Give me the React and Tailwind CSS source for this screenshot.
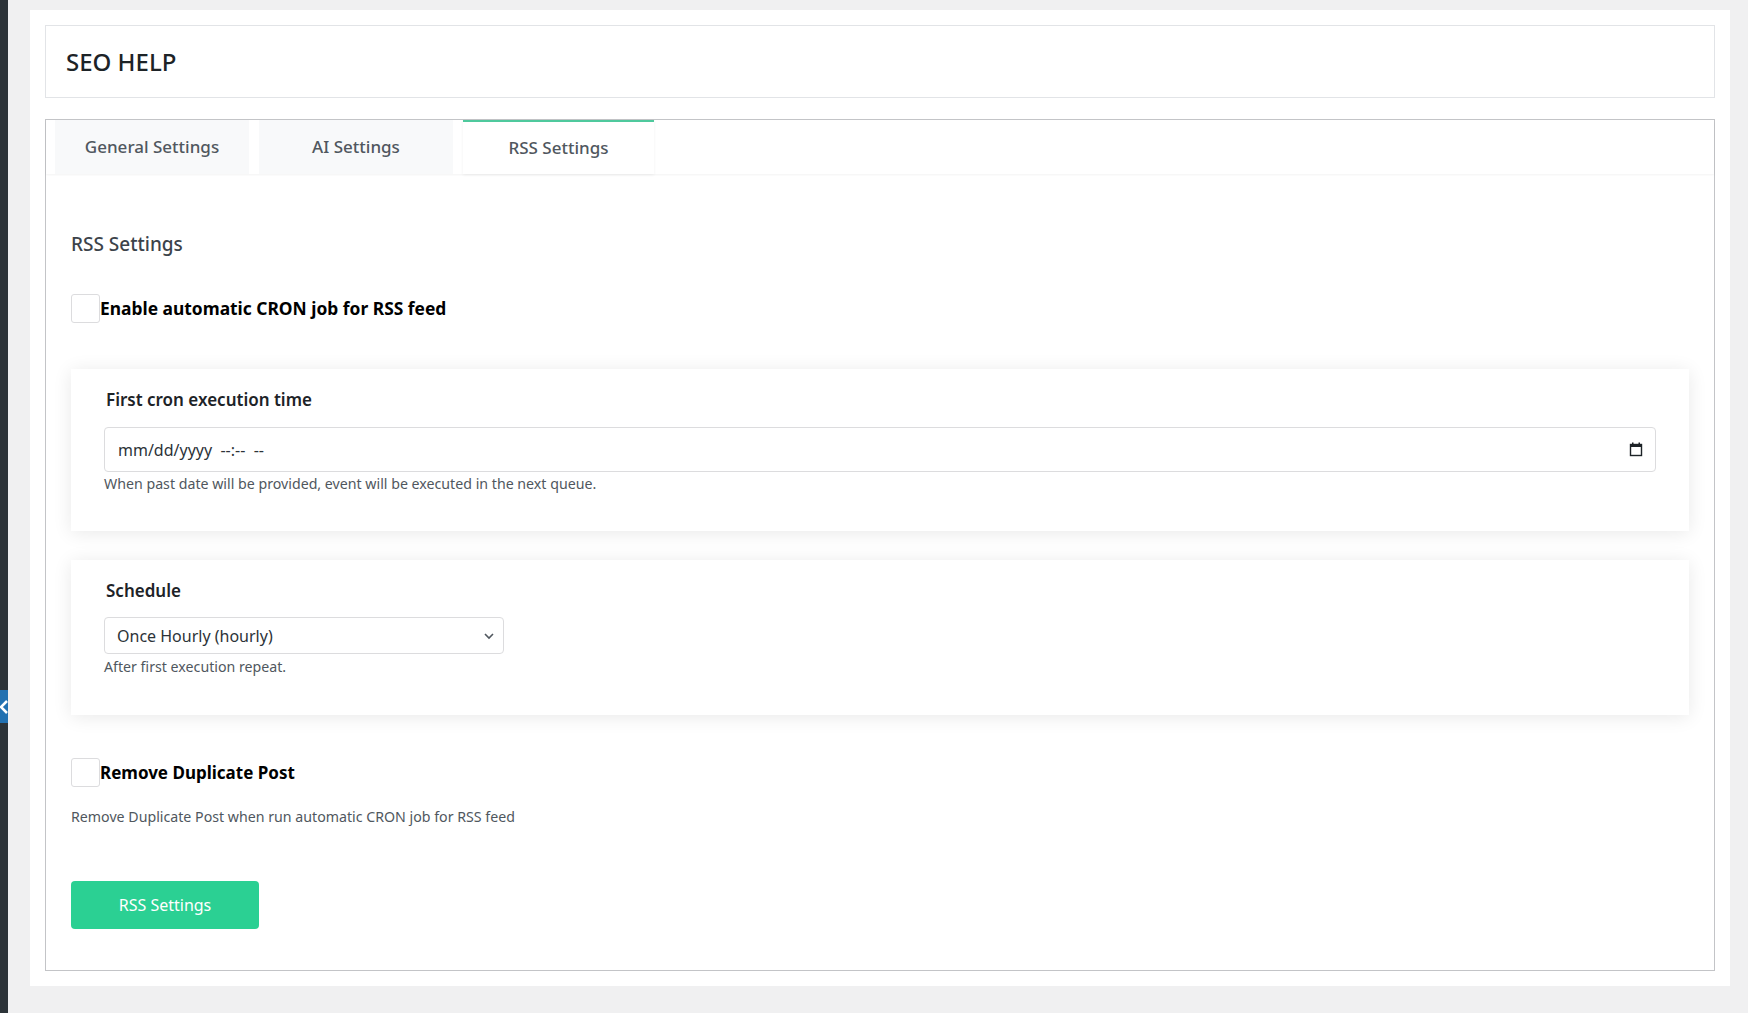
import { useState } from "react";

const tabs = ["General Settings", "AI Settings", "RSS Settings"];

const Checkbox = ({ checked, onChange }) => (
  <input
    type="checkbox"
    checked={checked}
    onChange={onChange}
    className="appearance-none w-[29px] h-[29px] shrink-0 border border-[#dcdcde] rounded-[3px] bg-white checked:bg-[#2bd093]"
  />
);

export default function App() {
  const [activeTab, setActiveTab] = useState("RSS Settings");
  const [cronEnabled, setCronEnabled] = useState(false);
  const [removeDuplicate, setRemoveDuplicate] = useState(false);
  const [schedule, setSchedule] = useState("hourly");
  const [firstRun, setFirstRun] = useState("");

  return (
    <div className="min-h-screen bg-[#f0f0f1] flex font-['Noto_Sans',sans-serif] text-[#1d2327]">
      {/* wp admin menu edge */}
      <div className="w-[8px] bg-[#2c3338] relative">
        <div className="absolute top-[690px] left-0 w-[8px] h-[33px] bg-[#2271b1] flex items-center">
          <svg width="8" height="14" viewBox="0 0 8 14">
            <path d="M7 1 L1 7 L7 13" fill="none" stroke="#fff" strokeWidth="2.5" />
          </svg>
        </div>
      </div>

      <div className="flex-1 pl-[22px] pr-[18px] pt-[10px] pb-[27px]">
        <div className="bg-white p-[15px]">
          <div className="border border-[#e2e4e7] h-[73px] flex items-center px-[20px]">
            <h1 className="text-[24px] font-medium text-[#1d2327]">SEO HELP</h1>
          </div>

          <div className="mt-[21px] border border-[#c3c4c7]">
            <div className="flex gap-[10px] pl-[9px] shadow-[0_1px_2px_rgba(0,0,0,0.05)]">
              {tabs.map((tab) => (
                <button
                  key={tab}
                  type="button"
                  onClick={() => setActiveTab(tab)}
                  className={
                    activeTab === tab
                      ? "h-[54px] w-[191px] bg-white border-t-2 border-[#4fc99d] text-[17px] font-medium text-[#50575e] shadow-[0_1px_3px_rgba(0,0,0,0.06)]"
                      : "h-[54px] w-[194px] bg-[#f8f9fa] text-[17px] font-medium text-[#50575e]"
                  }
                >
                  {tab}
                </button>
              ))}
            </div>

            <div className="px-[25px] pt-[57px] pb-[41px]">
              <h2 className="text-[19px] font-medium text-[#3c434a] leading-[26px]">RSS Settings</h2>

              <label className="mt-[37px] flex items-center">
                <Checkbox checked={cronEnabled} onChange={(e) => setCronEnabled(e.target.checked)} />
                <span className="text-[17.4px] font-bold text-black">Enable automatic CRON job for RSS feed</span>
              </label>

              <div className="mt-[46px] bg-white shadow-[0_2px_18px_rgba(0,0,0,0.09)] px-[33px] pt-[19px] pb-[37px]">
                <div className="text-[17px] font-semibold leading-[24px] text-[#1d2327] pl-[2px]">
                  First cron execution time
                </div>
                <div className="relative mt-[15px]">
                  <input
                    type="text"
                    value={firstRun}
                    onChange={(e) => setFirstRun(e.target.value)}
                    placeholder="mm/dd/yyyy  --:--  --"
                    className="w-full h-[45px] border border-[#dcdcde] rounded-[4px] px-[13px] text-[16px] text-[#2c3338] placeholder:text-[#2c3338] whitespace-pre"
                  />
                  <svg
                    className="absolute right-[13px] top-[15px] pointer-events-none"
                    width="14"
                    height="15"
                    viewBox="0 0 14 15"
                  >
                    <rect x="1.5" y="2.5" width="11" height="11" fill="none" stroke="#1d2327" strokeWidth="1.4" />
                    <rect x="1" y="2" width="12" height="3" fill="#1d2327" />
                    <rect x="3" y="0.5" width="1.5" height="2.5" fill="#1d2327" />
                    <rect x="9.5" y="0.5" width="1.5" height="2.5" fill="#1d2327" />
                  </svg>
                </div>
                <p className="mt-[2px] text-[14.2px] leading-[20px] text-[#50575e]">
                  When past date will be provided, event will be executed in the next queue.
                </p>
              </div>

              <div className="mt-[29px] bg-white shadow-[0_2px_18px_rgba(0,0,0,0.09)] px-[33px] pt-[19px] pb-[38px]">
                <div className="text-[17px] font-semibold leading-[24px] text-[#1d2327] pl-[2px]">Schedule</div>
                <div className="relative mt-[14px] w-[400px]">
                  <select
                    value={schedule}
                    onChange={(e) => setSchedule(e.target.value)}
                    className="appearance-none w-full h-[37px] border border-[#dcdcde] rounded-[4px] bg-white pl-[12px] pr-[30px] text-[16px] text-[#2c3338]"
                  >
                    <option value="hourly">Once Hourly (hourly)</option>
                    <option value="twicedaily">Twice Daily (twicedaily)</option>
                    <option value="daily">Once Daily (daily)</option>
                    <option value="weekly">Once Weekly (weekly)</option>
                  </select>
                  <svg
                    className="absolute right-[9px] top-[13px] pointer-events-none"
                    width="12"
                    height="12"
                    viewBox="0 0 12 12"
                  >
                    <path d="M2 4 L6 8 L10 4" fill="none" stroke="#50575e" strokeWidth="1.6" />
                  </svg>
                </div>
                <p className="mt-[3px] text-[14.2px] leading-[20px] text-[#50575e]">After first execution repeat.</p>
              </div>

              <label className="mt-[43px] flex items-center">
                <Checkbox checked={removeDuplicate} onChange={(e) => setRemoveDuplicate(e.target.checked)} />
                <span className="text-[17px] font-bold text-black">Remove Duplicate Post</span>
              </label>
              <p className="mt-[20px] text-[14.2px] leading-[20px] text-[#50575e]">
                Remove Duplicate Post when run automatic CRON job for RSS feed
              </p>

              <button
                type="button"
                className="mt-[54px] w-[188px] h-[48px] bg-[#2bd093] rounded-[4px] text-white text-[16px]"
              >
                RSS Settings
              </button>
            </div>
          </div>
        </div>
      </div>
    </div>
  );
}
